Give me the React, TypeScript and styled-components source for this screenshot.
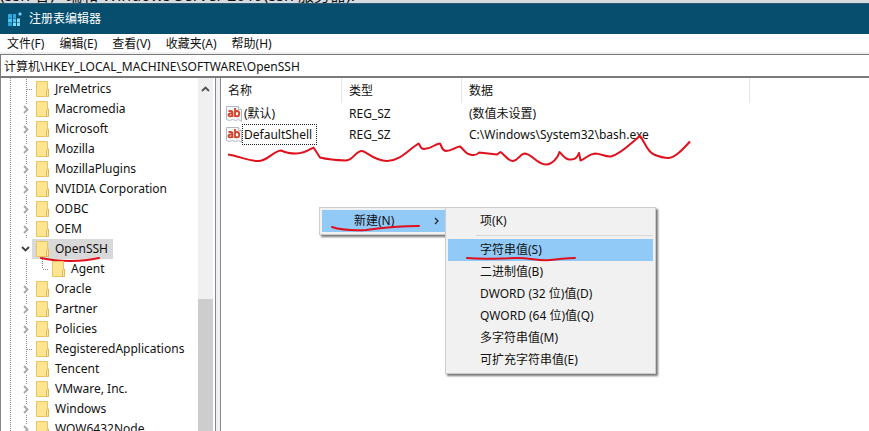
import React from "react";
import styled, { createGlobalStyle } from "styled-components";

const GlobalStyle = createGlobalStyle`
  *, *::before, *::after { box-sizing: border-box; }
  body {
    margin: 0;
    overflow: hidden;
    background: #fff;
    color: #111;
    font: 12px/20px "Noto Sans", "Noto Sans CJK SC", sans-serif;
  }
  button, input { font: inherit; color: inherit; border: 0; border-radius: 0; background: none; margin: 0; padding: 0; }
  ul { list-style: none; margin: 0; padding: 0; }
`;

const RED = "#e0101c";

const Screen = styled.div`
  display: flex;
  flex-direction: column;
  height: 100vh;
`;

const Backdrop = styled.div`
  display: flex;
  align-items: flex-end;
  flex: none;
  height: 3px;
  overflow: hidden;
  background: #d5dbdf;
  font-size: 16px;
  line-height: 16px;
  white-space: nowrap;
`;

const TitleBar = styled.header`
  display: flex;
  align-items: center;
  gap: 7px;
  flex: none;
  height: 31px;
  padding-left: 7px;
  background: #064d6e;
  border-top: 1px solid #2d5a70;
  color: #fff;
`;

const Title = styled.h1`
  margin: 0;
  font-size: 12px;
  font-weight: 400;
`;

const MenuBar = styled.nav`
  display: flex;
  gap: 15px;
  flex: none;
  height: 20px;
  padding-left: 7px;
  border-bottom: 2px solid #f0f0f0;
  line-height: 20px;
`;

const MenuButton = styled.button`
  height: 20px;
  white-space: nowrap;
`;

const Address = styled.input`
  flex: none;
  width: 100%;
  height: 24px;
  padding: 0 3px;
  border: solid #7a7a7a;
  border-width: 1px 0 2px 1px;
  outline: none;
`;

const Panes = styled.div`
  display: flex;
  flex: 1;
  min-height: 0;
`;

const TreePane = styled.aside`
  display: flex;
  flex: none;
  width: 216px;
  border: solid #828790;
  border-width: 0 1px;
  overflow: hidden;
`;

const TreeList = styled.ul`
  flex: 1;
  min-width: 0;
  padding: 1px 0 0 9px;
  background: repeating-linear-gradient(#8a8a8a 0 1px, transparent 1px 2px) 9px 0 / 1px 100% no-repeat;
`;

const TreeRow = styled.li<{ $nested?: boolean }>`
  display: flex;
  align-items: center;
  height: 20px;
  padding-left: ${(p) => (p.$nested ? 25 : 9)}px;
`;

const Twist = styled.svg`
  flex: none;
  width: 13px;
  height: 20px;
`;

const NodeButton = styled.button<{ $selected?: boolean }>`
  position: relative;
  display: flex;
  align-items: center;
  gap: 5px;
  height: 20px;
  padding: 0 5px 0 4px;
  background: ${(p) => (p.$selected ? "#d9d9d9" : "transparent")};
  white-space: nowrap;
`;

const ScrollTrack = styled.div`
  display: flex;
  flex-direction: column;
  align-items: stretch;
  flex: none;
  width: 17px;
  padding-right: 2px;
  background: #f0f0f0 content-box;
`;

const ScrollUp = styled.button`
  height: 21px;
  line-height: 0;
`;

const ScrollGap = styled.div`
  flex: 200;
`;

const ScrollThumb = styled.div`
  flex: 132;
  background: #cdcdcd;
`;

const Splitter = styled.div`
  flex: none;
  width: 4px;
  background: #f0f0f0;
`;

const ListPane = styled.main`
  position: relative;
  flex: 1;
  min-width: 0;
  border-left: 1px solid #828790;
`;

const ValueTable = styled.table`
  table-layout: fixed;
  border-collapse: separate;
  border-spacing: 0;
  width: 529px;
`;

const HeadCell = styled.th<{ $width: number }>`
  width: ${(p) => p.$width}px;
  height: 25px;
  padding: 0 0 0 7px;
  border-right: 1px solid #e5e5e5;
  font-weight: 400;
  text-align: left;
`;

const Cell = styled.td`
  height: 21px;
  padding: 0 0 0 7px;
  line-height: 20px;
  white-space: nowrap;
`;

const NameCell = styled(Cell)`
  padding-left: 5px;
`;

const ValueName = styled.div`
  display: flex;
  align-items: center;
`;

const ValueLabel = styled.span<{ $focused?: boolean }>`
  height: 21px;
  padding: 0 4px 0 1px;
  border: 1px dotted ${(p) => (p.$focused ? "#222" : "transparent")};
`;

const Scribble = styled.svg`
  position: absolute;
  left: 7px;
  top: 56px;
  fill: none;
  stroke: ${RED};
  stroke-width: 2;
  stroke-linejoin: round;
  pointer-events: none;
`;

const Underline = styled.svg<{ $left: number; $bottom: number }>`
  position: absolute;
  left: ${(p) => p.$left}px;
  bottom: ${(p) => p.$bottom}px;
  fill: none;
  stroke: ${RED};
  stroke-width: 2;
  stroke-linecap: round;
  pointer-events: none;
`;

const ContextMenus = styled.div`
  position: absolute;
  left: 98px;
  top: 129px;
  display: flex;
  align-items: flex-start;
`;

const Popup = styled.div<{ $width: number }>`
  width: ${(p) => p.$width}px;
  padding: 2px;
  border: 1px solid #ccc;
  background: #f1f1f1;
  box-shadow: 2px 2px 2px #777;
`;

const RootPopup = styled(Popup)`
  padding-right: 0;
  border-right: 0;
`;

const PopupItem = styled.button<{ $active?: boolean }>`
  position: relative;
  display: flex;
  align-items: center;
  justify-content: space-between;
  width: 100%;
  height: 22px;
  padding: 0 5px 0 32px;
  background: ${(p) => (p.$active ? "#91c9f7" : "transparent")};
  white-space: nowrap;
`;

const Separator = styled.hr`
  height: 1px;
  margin: 3px 0 3px 28px;
  border: 0;
  background: #d7d7d7;
`;

const ParentLine = styled.span`
  flex: none;
  width: 1px;
  height: 20px;
  margin: 0 8px 0 -9px;
  background: repeating-linear-gradient(#8a8a8a 0 1px, transparent 1px 2px);
`;

function RegistryIcon() {
  return (
    <svg width="15" height="15" viewBox="0 0 15 15" aria-hidden="true">
      <path d="M1 2h4v4H1zM6 2h3v4H6z" fill="#2fa8e0" />
      <path d="M1 6.500h4v4H1zM6 6.500h3v4H6z" fill="#4cc6f2" />
      <path d="M10 6.500h3v4h-3zM6 11h3v3H6zM10 11h3v3h-3z" fill="#74defc" />
      <path d="M1 11h4v3H1z" fill="#2aa3dc" />
      <path d="M13 0l2 2-2 2-2-2z" fill="#6fd6f8" />
    </svg>
  );
}

function FolderIcon() {
  return (
    <svg width="14" height="16" viewBox="0 0 14 16" aria-hidden="true">
      <path d="M.5.5h11v8h1v7H.5z" fill="#ffe591" stroke="#e8c560" />
      <path d="M10.500 15V9.500l2-1.500v7.500z" fill="#fff0b5" stroke="#dfb951" />
    </svg>
  );
}

function StringIcon() {
  return (
    <svg width="16" height="16" viewBox="0 0 16 16" aria-hidden="true">
      <path d="M.5.5h12l3 3v12l-3-2-3 1-3-1-3 1-3-1z" fill="#f7f8f9" stroke="#b4bbc0" />
      <path d="M12.500.5v3h3" fill="#fff" stroke="#b4bbc0" />
      <g fill="none" stroke="#d0452c" strokeWidth="1.800">
        <path d="M2.500 5h2.300q1.700 0 1.700 1.700V11M6.500 7.500H4.500Q2.500 7.500 2.500 9T4.300 10.300 6.500 9" />
        <path d="M9 2v9M9 6.500Q9.700 5 11 5q2.200 0 2.200 2.700T11 10.400Q9.700 10.400 9 9" />
      </g>
    </svg>
  );
}

type Mark = "closed" | "open" | "leaf" | "child";

function TreeMark({ mark }: { mark: Mark }) {
  const dots = { stroke: "#888", strokeDasharray: "1 1", fill: "none" };
  return (
    <Twist viewBox="0 0 13 20" aria-hidden="true">
      {mark === "closed" && (
        <>
          <path d="M7.500 0v5M7.500 16v4" {...dots} />
          <path d="M5 7l3.500 3.500L5 14" fill="none" stroke="#a6a6a6" strokeWidth="1.800" />
        </>
      )}
      {mark === "open" && <path d="M3 8l3.500 3.500L10 8" fill="none" stroke="#404040" strokeWidth="1.800" />}
      {mark === "leaf" && <path d="M7.500 0v20M8 10.500h5" {...dots} />}
      {mark === "child" && <path d="M7.500 0v10M8 10.500h5" {...dots} />}
    </Twist>
  );
}

const nodes: { name: string; mark: Mark }[] = [
  { name: "JreMetrics", mark: "leaf" },
  { name: "Macromedia", mark: "closed" },
  { name: "Microsoft", mark: "closed" },
  { name: "Mozilla", mark: "closed" },
  { name: "MozillaPlugins", mark: "closed" },
  { name: "NVIDIA Corporation", mark: "closed" },
  { name: "ODBC", mark: "closed" },
  { name: "OEM", mark: "closed" },
  { name: "OpenSSH", mark: "open" },
  { name: "Agent", mark: "child" },
  { name: "Oracle", mark: "closed" },
  { name: "Partner", mark: "closed" },
  { name: "Policies", mark: "closed" },
  { name: "RegisteredApplications", mark: "leaf" },
  { name: "Tencent", mark: "closed" },
  { name: "VMware, Inc.", mark: "closed" },
  { name: "Windows", mark: "closed" },
  { name: "WOW6432Node", mark: "closed" },
];

const values = [
  { name: "(默认)", type: "REG_SZ", data: "(数值未设置)" },
  { name: "DefaultShell", type: "REG_SZ", data: "C:\\Windows\\System32\\bash.exe" },
];

const valueKinds = ["二进制值(B)", "DWORD (32 位)值(D)", "QWORD (64 位)值(Q)", "多字符串值(M)", "可扩充字符串值(E)"];

export default function App() {
  return (
    <Screen>
      <GlobalStyle />
      <Backdrop>(ssh 客户端和 Windows Server 2019(ssh 服务器).</Backdrop>
      <TitleBar>
        <RegistryIcon />
        <Title>注册表编辑器</Title>
      </TitleBar>
      <MenuBar>
        {["文件(F)", "编辑(E)", "查看(V)", "收藏夹(A)", "帮助(H)"].map((m) => (
          <MenuButton key={m}>{m}</MenuButton>
        ))}
      </MenuBar>
      <Address aria-label="地址" defaultValue={"计算机\\HKEY_LOCAL_MACHINE\\SOFTWARE\\OpenSSH"} />
      <Panes>
        <TreePane>
          <TreeList>
            {nodes.map(({ name, mark }) => (
              <TreeRow key={name} $nested={mark === "child"}>
                {mark === "child" && <ParentLine />}
                <TreeMark mark={mark} />
                <NodeButton $selected={mark === "open"}>
                  <FolderIcon />
                  {name}
                  {mark === "open" && (
                    <Underline $left={8} $bottom={-4} width="60" height="6" viewBox="0 0 60 6" aria-hidden="true">
                      <path d="M1 1q13 3 29 3t29-3" />
                    </Underline>
                  )}
                </NodeButton>
              </TreeRow>
            ))}
          </TreeList>
          <ScrollTrack>
            <ScrollUp aria-label="向上滚动">
              <svg width="9" height="6" viewBox="0 0 9 6" aria-hidden="true">
                <path d="M1 5l3.500-3.500L8 5" fill="none" stroke="#505050" strokeWidth="1.800" />
              </svg>
            </ScrollUp>
            <ScrollGap />
            <ScrollThumb />
          </ScrollTrack>
        </TreePane>
        <Splitter />
        <ListPane>
          <ValueTable>
            <thead>
              <tr>
                <HeadCell $width={121}>名称</HeadCell>
                <HeadCell $width={120}>类型</HeadCell>
                <HeadCell $width={288}>数据</HeadCell>
              </tr>
            </thead>
            <tbody>
              {values.map((v, i) => (
                <tr key={v.name}>
                  <NameCell>
                    <ValueName>
                      <StringIcon />
                      <ValueLabel $focused={i === 1}>{v.name}</ValueLabel>
                    </ValueName>
                  </NameCell>
                  <Cell>{v.type}</Cell>
                  <Cell>{v.data}</Cell>
                </tr>
              ))}
            </tbody>
          </ValueTable>
          <Scribble width="464" height="34" viewBox="228 134 464 34" aria-hidden="true">
            <path d="M228 154.500C238 156 249 161 258 161C268 161 273 151 281 150.500C286 153 291 153.500 296 153.500C304 153.500 309 150 313.500 147.500L320 157.500Q330 160 346 160.500C354 160 355 151 362 151C366 151 374 161 387 161C400 161 408 150 418.500 143.500C421 146 420 149 424 149C432 149 434 144 440 143.500C442 146 441 150 446 151C452 151 455 147 460 146.500C463 148 465 154 470 154.500C475 156 477 155 479 152.500L497 154.500L500.500 152C505 155 508 161 513 161C519 160 520 153.500 525 153.500C532 154 537 164.500 546 164.500C552 164.500 558 158 559.500 152C562 154 565 160 570 159.500C576 160 578 156 579 153L580.500 160.500C586 159 588 154 595 153.500C601 153.500 605 157 611 156.500C621 154 631 143 640 136C645 142 647 152 654 154.500Q662 158 669 158C676 157 683 149 690 141.500" />
          </Scribble>
          <ContextMenus>
            <RootPopup $width={126}>
              <PopupItem $active>
                新建(N)
                <svg width="6" height="8" viewBox="0 0 6 8" aria-hidden="true">
                  <path d="M1 1l3 3-3 3" fill="none" stroke="#222" strokeWidth="1.200" />
                </svg>
                <Underline $left={8} $bottom={0} width="92" height="8" viewBox="0 0 92 8" aria-hidden="true">
                  <path d="M2 3q12 4 34 3c21-3 36-4 53-4" />
                </Underline>
              </PopupItem>
            </RootPopup>
            <Popup $width={211}>
              <PopupItem>项(K)</PopupItem>
              <Separator />
              <PopupItem $active>
                字符串值(S)
                <Underline $left={17} $bottom={-1} width="112" height="6" viewBox="0 0 112 6" aria-hidden="true">
                  <path d="M2 2c20 2 35 0 50 0s20 3 33 2 16-2 25-2" />
                </Underline>
              </PopupItem>
              {valueKinds.map((k) => (
                <PopupItem key={k}>{k}</PopupItem>
              ))}
            </Popup>
          </ContextMenus>
        </ListPane>
      </Panes>
    </Screen>
  );
}
